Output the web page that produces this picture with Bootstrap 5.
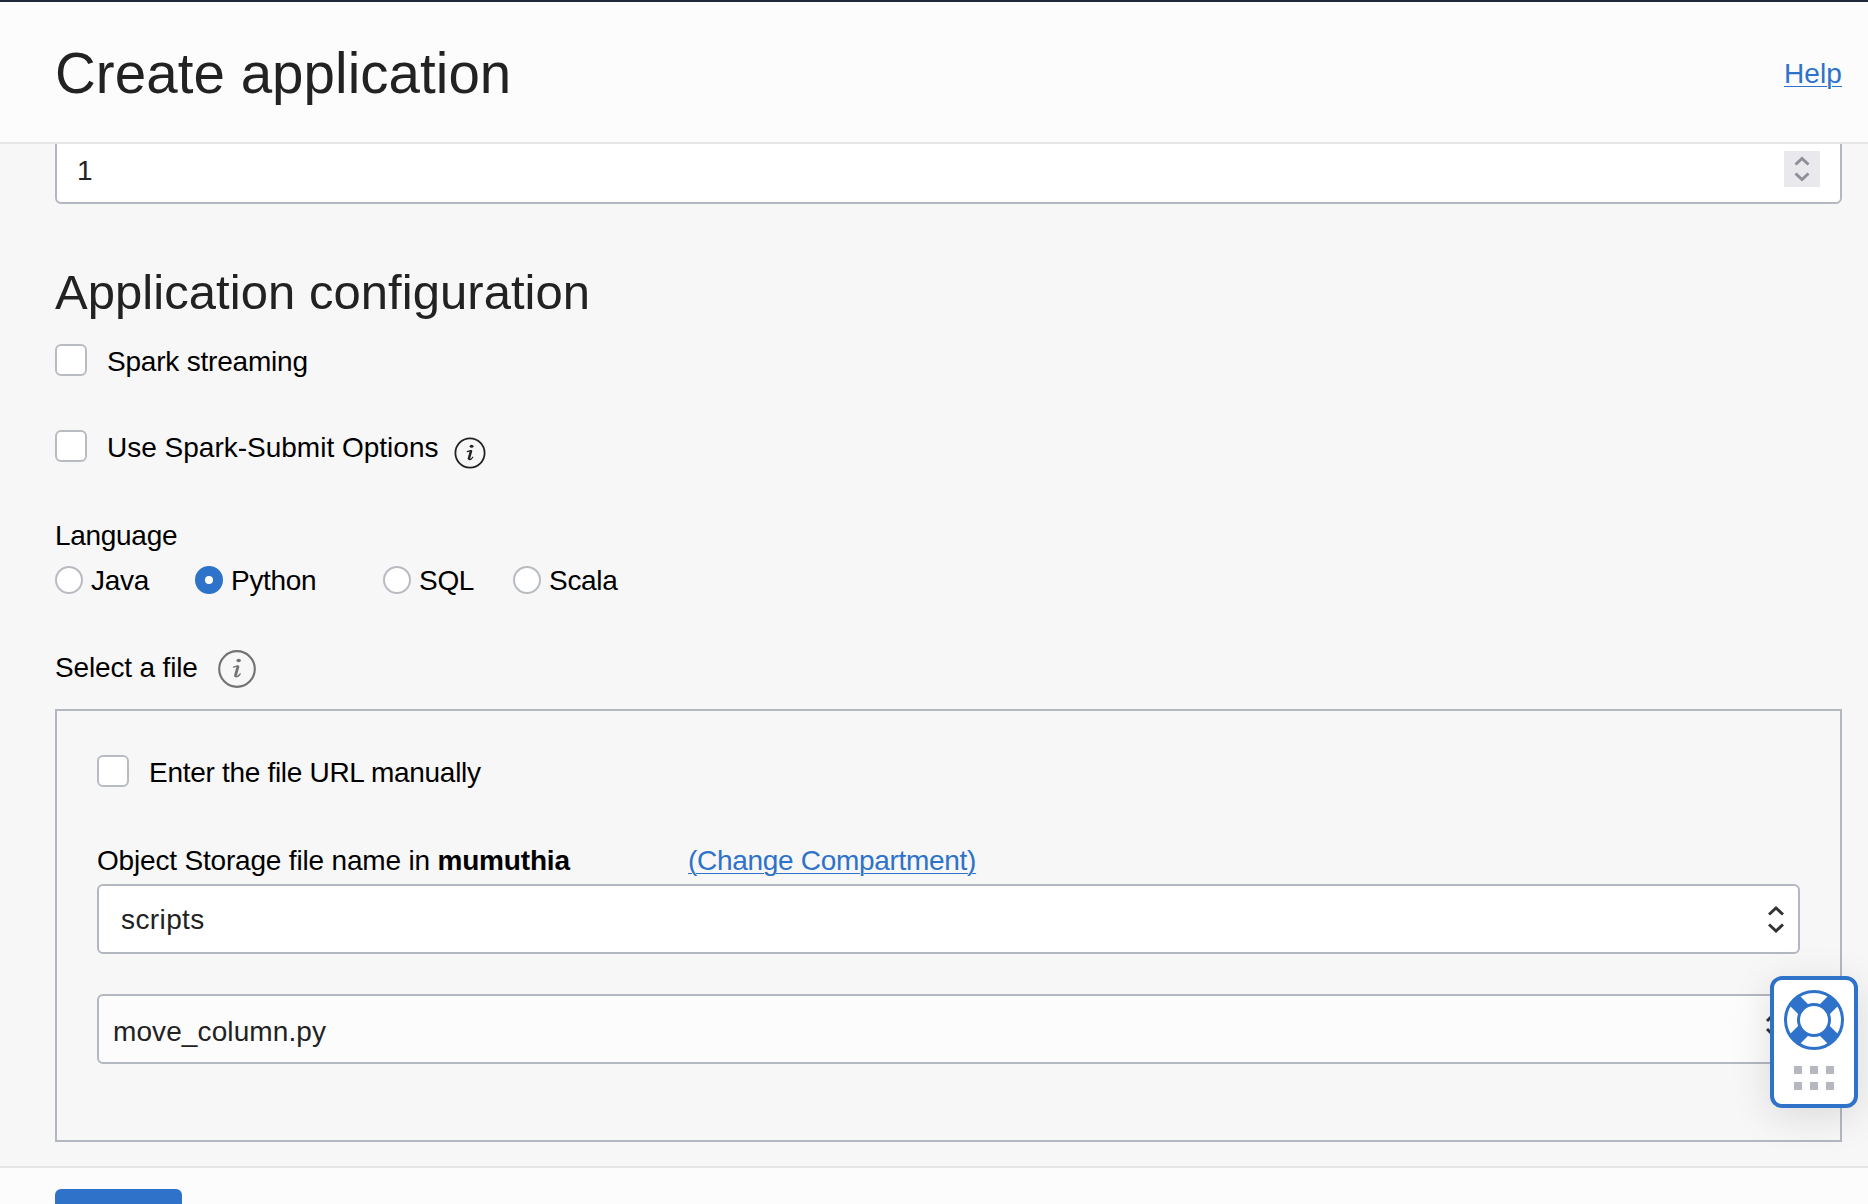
<!DOCTYPE html>
<html lang="en">
<head>
<meta charset="utf-8">
<title>Create application</title>
<link rel="stylesheet" href="https://cdn.jsdelivr.net/npm/bootstrap@5.3.0/dist/css/bootstrap.min.css">
<style>
body{font-family:"Liberation Sans",Arial,sans-serif;font-size:28px;line-height:32px;color:#000;background:#f7f7f7;height:1204px;overflow:hidden;letter-spacing:-.3px}
.page-head{height:144px;background:#fcfcfc;border-top:2px solid #1f2a38;border-bottom:2px solid #e6e6e6;padding:0 26px 0 55px}
.page-head h1{font-size:56.5px;line-height:64px;color:#222;font-weight:400;letter-spacing:.05px;padding-top:3px}
a.act{color:#2e72c9;text-decoration:underline;text-decoration-thickness:1px;text-underline-offset:3px}
a.help{letter-spacing:.1px;padding-top:4px}
.page-body{height:1022px;padding:0 26px 0 55px}
.page-body h2{font-size:49px;line-height:54px;font-weight:400;color:#222;margin:61px 0 0;letter-spacing:.05px}
.field{height:70px;border:2px solid #b3b8c0;border-radius:6px;background:#fff;color:#222;font-size:28px;line-height:32px}
.field-top{margin-top:-10px;padding:0 20px}
.field-top .val{padding-top:3px}
.spin{width:36px;height:36px;background:#e9e8ed}
.form-check-input.box{width:32px;height:32px;border:2px solid #b8bcc2;border-radius:6px;margin:0 20px 0 0;background-color:#fff}
.form-check-input.dot{width:28px;height:28px;border:2px solid #b8bcc2;margin:0 8px 0 0;background-color:#fff}
.form-check-input.dot:checked{border:10px solid #2e72c9;background:#fff}
label{padding-top:2px}
.line label{padding-top:3px}
.line{height:32px}
.r1{margin-top:25px}.r2{margin-top:54px}.r3{margin-top:58px}
.t-st{letter-spacing:-.2px}.t-su{letter-spacing:0}
.i1{margin:14px 0 0 16px}
.radios{height:28px;margin-top:14px}
.c1{width:140px}.c2{width:188px}.c3{width:130px}
.r4{margin-top:56px;height:38px}
.r4 svg{margin-left:20px}
.t-sel{letter-spacing:-.15px;padding-bottom:3px}
.panel{margin-top:21px;height:433px;border:2px solid #b3b8c0;padding:44px 40px 0}
.r5{margin-top:58px;height:32px}
.r5 .name{width:591px;letter-spacing:-.18px}
.f1{margin-top:7px;padding:0 14px 0 22px}
.f1 .val{letter-spacing:.4px;padding-top:1px}
.f2{margin-top:40px;padding:0 16px 0 14px;background:#fcfcfc}
.f2 .val{letter-spacing:.1px;padding-top:5px}
.f2 svg{margin-bottom:8px}
.page-foot{height:38px;background:#fcfcfc;border-top:2px solid #e6e6e6;padding:21px 0 0 55px;overflow:hidden}
.btn.go{width:127px;height:64px;background:#2e72c9;border-radius:6px}
.dock{position:absolute;left:1770px;top:976px;width:88px;height:132px;border:4px solid #2e72c9;border-radius:12px;background:#fff;box-shadow:0 8px 40px rgba(0,0,0,.12)}
</style>
<script src="https://cdn.jsdelivr.net/npm/bootstrap@5.3.0/dist/js/bootstrap.bundle.min.js"></script>
</head>
<body class="position-relative">
<header class="page-head d-flex align-items-center justify-content-between">
  <h1 class="mb-0">Create application</h1>
  <a class="act help" href="#">Help</a>
</header>
<main class="page-body overflow-hidden">
  <div class="field field-top d-flex align-items-center justify-content-between"><span class="val">1</span>
    <span class="spin"><svg class="d-block" width="36" height="36" fill="none" stroke="#8f8e99" stroke-width="3"><path d="M11.500 13.500 18 7.500l6.500 6M11.500 22.500 18 28.500l6.500-6"/></svg></span>
  </div>
  <h2>Application configuration</h2>
  <div class="line r1 d-flex align-items-center"><input class="form-check-input box" type="checkbox" id="st"><label for="st" class="t-st">Spark streaming</label></div>
  <div class="line r2 d-flex align-items-center"><input class="form-check-input box" type="checkbox" id="su"><label for="su" class="t-su">Use Spark-Submit Options</label>
    <svg class="i1" width="32" height="32" viewBox="0 0 32 32" fill="none" stroke="#222" stroke-linecap="round"><circle cx="16" cy="16" r="14.600" stroke-width="1.800"/><ellipse cx="17.600" cy="9.300" rx="1.900" ry="1.500" fill="#222" stroke="none"/><path d="M13.200 14.600 16.500 13.600M15.200 22.600c1.500 0 2.700-.8 3.600-2.400" stroke-width="1.200"/><path d="M17 14.200 14.900 21.500" stroke-width="2.500"/></svg>
  </div>
  <div class="line r3">Language</div>
  <div class="radios d-flex align-items-center">
    <div class="c1 d-flex align-items-center"><input class="form-check-input dot" type="radio" name="l" id="l1"><label for="l1">Java</label></div>
    <div class="c2 d-flex align-items-center"><input class="form-check-input dot" type="radio" name="l" id="l2" checked><label for="l2">Python</label></div>
    <div class="c3 d-flex align-items-center"><input class="form-check-input dot" type="radio" name="l" id="l3"><label for="l3">SQL</label></div>
    <div class="d-flex align-items-center"><input class="form-check-input dot" type="radio" name="l" id="l4"><label for="l4">Scala</label></div>
  </div>
  <div class="r4 d-flex align-items-center"><span class="t-sel">Select a file</span>
    <svg width="38" height="38" viewBox="0 0 32 32" fill="none" stroke="#737373" stroke-linecap="round"><circle cx="16" cy="16" r="15" stroke-width="1.800"/><ellipse cx="17.400" cy="8.900" rx="1.900" ry="1.500" fill="#737373" stroke="none"/><path d="M13.100 14.400 16.200 13.400M15 22.600c1.500 0 2.700-.8 3.600-2.400" stroke-width="1.200"/><path d="M16.800 14 14.700 21.500" stroke-width="2.400"/></svg>
  </div>
  <section class="panel">
    <div class="line d-flex align-items-center"><input class="form-check-input box" type="checkbox" id="url"><label for="url" class="t-url">Enter the file URL manually</label></div>
    <div class="r5 d-flex"><span class="name text-nowrap">Object Storage file name in <b>mumuthia</b></span><a class="act chg" href="#">(Change Compartment)</a></div>
    <div class="field f1 d-flex align-items-center justify-content-between"><span class="val">scripts</span>
      <svg width="16" height="30" fill="none" stroke="#333" stroke-width="3"><path d="M1 10.500 8 4l7 6.500M1 20.500 8 27l7-6.500"/></svg></div>
    <div class="field f2 d-flex align-items-center justify-content-between"><span class="val">move_column.py</span>
      <svg width="16" height="30" fill="none" stroke="#333" stroke-width="3"><path d="M1 11 8 4l7 7M1 19l7 7 7-7"/></svg></div>
  </section>
</main>
<footer class="page-foot"><button class="btn go d-block p-0 border-0" aria-label="Create"></button></footer>
<aside class="dock">
  <svg class="d-block" width="80" height="124" viewBox="1774 980 80 124">
    <circle cx="1814" cy="1020" r="28.500" fill="#fff" stroke="#2e72c9" stroke-width="3"/>
    <path d="M1794.500 1000.500l39 39M1833.500 1000.500l-39 39" stroke="#2e72c9" stroke-width="14"/>
    <circle cx="1814" cy="1020" r="15.500" fill="#fff" stroke="#2e72c9" stroke-width="3"/>
    <path d="M1794 1066h8v8h-8zM1810 1066h8v8h-8zM1826 1066h8v8h-8zM1794 1082h8v8h-8zM1810 1082h8v8h-8zM1826 1082h8v8h-8z" fill="#b5b8c1"/>
  </svg>
</aside>
</body>
</html>
